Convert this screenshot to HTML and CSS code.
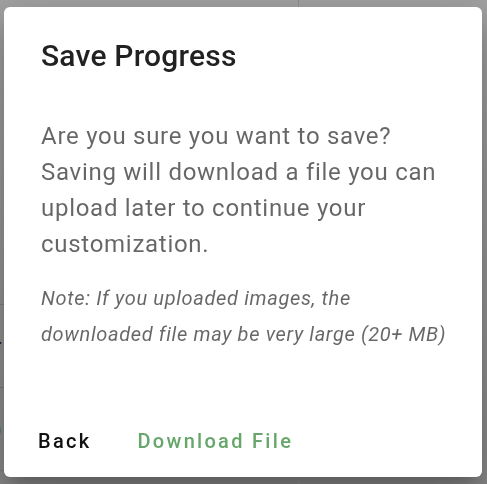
FILE: index.html
```html
<!DOCTYPE html>
<html>
<head>
<meta charset="utf-8">
<link rel="stylesheet" href="styles.css">
</head>
<body>
<div class="page">
  <div class="bg-col">
    <div class="bg-row tall"></div>
    <div class="bg-row"><span class="bg-text">r</span></div>
    <div class="bg-row"><span class="bg-text">)</span></div>
    <div class="bg-row last"></div>
  </div>
  <div class="bg-main"></div>
</div>
<div class="dialog">
  <h2 class="title">Save Progress</h2>
  <div class="content">
    <p class="text">Are you sure you want to save? Saving will download a file you can upload later to continue your customization.</p>
    <p class="note">Note: If you uploaded images, the downloaded file may be very large (20+ MB)</p>
  </div>
  <div class="actions">
    <button class="btn back">Back</button>
    <button class="btn primary">Download File</button>
  </div>
</div>
</body>
</html>
```
FILE: styles.css
```css
html, body {
  margin: 0;
  padding: 0;
  height: 100%;
}
body {
  background: #8c8c8c;
  font-family: Roboto, "Liberation Sans", sans-serif;
  overflow: hidden;
}
.page {
  display: flex;
  height: 484px;
  overflow: hidden;
  background: linear-gradient(#a2a2a2, #8a8a8a);
}
.bg-col {
  width: 298px;
  display: flex;
  flex-direction: column;
  border-right: 1px solid #8f8f8f;
}
.bg-row {
  flex-shrink: 0;
  height: 82px;
  border-top: 1px solid #7e7e7e;
  display: flex;
  align-items: center;
}
.bg-row.tall {
  height: 304px;
  border-top: none;
}
.bg-row.last {
  height: auto;
  flex: 1;
}
.bg-text {
  font-size: 22px;
  color: #111;
  margin-left: -6px;
}
.bg-main {
  flex: 1;
}
.dialog {
  position: fixed;
  left: 4px;
  top: 7px;
  width: 478px;
  height: 470px;
  box-sizing: border-box;
  background: #fff;
  border-radius: 6px;
  box-shadow: 0 11px 15px -7px rgba(0,0,0,0.2), 0 24px 38px 3px rgba(0,0,0,0.14), 0 9px 46px 8px rgba(0,0,0,0.12);
  display: flex;
  flex-direction: column;
  padding: 25px 30px 0 37px;
}
.title {
  margin: 0;
  font-size: 30px;
  font-weight: 500;
  line-height: 48px;
  color: rgba(0,0,0,0.87);
  letter-spacing: 0.2px;
}
.content {
  margin-top: 38px;
}
.text {
  margin: 0;
  font-size: 24px;
  line-height: 36px;
  color: rgba(0,0,0,0.6);
  letter-spacing: 0.72px;
}
.note {
  margin: 18px 0 0;
  font-size: 20px;
  font-style: italic;
  line-height: 36px;
  color: rgba(0,0,0,0.6);
  letter-spacing: 0.65px;
}
.actions {
  margin-top: auto;
  margin-bottom: 11px;
  margin-left: -3px;
  display: flex;
  align-items: center;
  gap: 46px;
}
.btn {
  border: none;
  background: none;
  padding: 8px 0;
  font-family: Roboto, "Liberation Sans", sans-serif;
  font-size: 20px;
  font-weight: 500;
  letter-spacing: 2.3px;
  line-height: 34px;
  cursor: pointer;
}
.back {
  color: #111;
}
.primary {
  color: #66a66b;
}
```
